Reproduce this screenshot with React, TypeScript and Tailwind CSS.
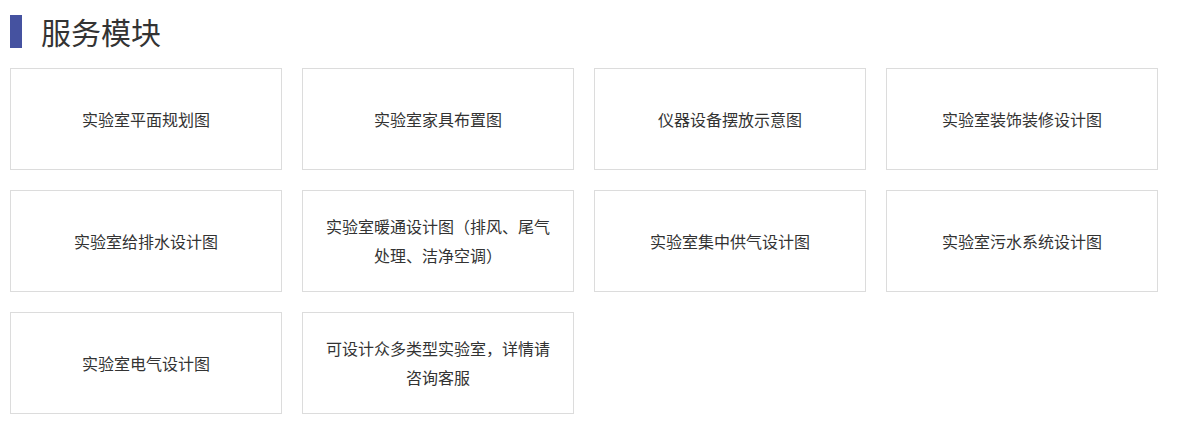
import React from "react";

const items = [
  "实验室平面规划图",
  "实验室家具布置图",
  "仪器设备摆放示意图",
  "实验室装饰装修设计图",
  "实验室给排水设计图",
  "实验室暖通设计图（排风、尾气处理、洁净空调）",
  "实验室集中供气设计图",
  "实验室污水系统设计图",
  "实验室电气设计图",
  "可设计众多类型实验室，详情请咨询客服",
];

export default function App() {
  return (
    <div
      className="w-[1177px] h-[431px] bg-white"
      style={{ fontFamily: '"Microsoft YaHei", "Noto Sans CJK SC", sans-serif' }}
    >
      <div className="flex items-center pt-[15px] pl-[10px]">
        <div className="w-[12px] h-[33px] bg-[#4552a0]" />
        <h2 className="ml-[19px] text-[30px] leading-[33px] text-[#333]">服务模块</h2>
      </div>
      <div className="mt-[20px] ml-[10px] grid grid-cols-[repeat(4,272px)] gap-[20px]">
        {items.map((t) => (
          <div
            key={t}
            className="h-[102px] border border-[#dcdcdc] flex items-center justify-center text-center px-[22px] text-[16px] leading-[29px] text-[#333]"
          >
            {t}
          </div>
        ))}
      </div>
    </div>
  );
}
